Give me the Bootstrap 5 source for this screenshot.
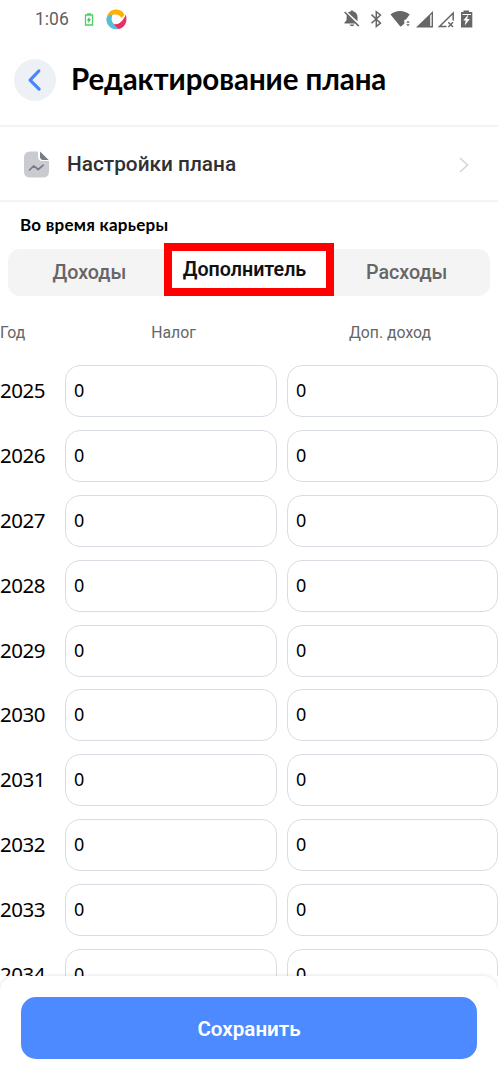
<!DOCTYPE html>
<html lang="ru">
<head>
<meta charset="utf-8">
<meta name="viewport" content="width=device-width, initial-scale=1">
<title>Редактирование плана</title>
<link rel="stylesheet" href="https://cdn.jsdelivr.net/npm/bootstrap@5.3.0/dist/css/bootstrap.min.css">
<style>
body{font-family:Roboto,"Liberation Sans",sans-serif;background:#fff;color:#000;line-height:1}
.screen{height:1080px}
svg{display:block;flex:none}
.statusbar{height:38px;padding:0 25px 0 35px;color:#5f5f5f}
.clock{font-size:17.500px;line-height:38px;width:49px}
.app-mark{margin-left:11.500px}
.titlebar{height:89px;padding:4px 14px 0;border-bottom:2px solid #f3f4f6}
.back{width:42px;height:42px;background:#edf1f5;border:0;padding:0;margin-top:-8px}
.title{font:700 29.5px/40px Lato,"Noto Sans",sans-serif;letter-spacing:-.08px;margin:-9px 0 0 15px}
.settings{height:75px;padding:2px 29px 0 24px;border-bottom:2px solid #f3f4f6;color:#303033}
.settings-name{font-size:20.800px;font-weight:500;margin-left:18px}
.period{font:700 17px/24px Lato,"Noto Sans",sans-serif;letter-spacing:.25px;height:47px;padding:11px 20px 0}
.segments{height:47px;margin:0 8px;background:#f4f4f4;border-radius:12px;font-size:19.700px;font-weight:500;color:#666}
.seg{flex:1 1 0;text-align:center;line-height:47px}
.seg:first-child{padding-left:2px}
.seg:nth-child(3){padding-right:4px}
.seg-active{left:156px;top:-6px;width:170px;height:53px;border:8.5px solid #f00;background:#fff;color:#111;font-weight:600;line-height:37px;padding-right:9px}
.fields{display:grid;grid-template-columns:65px 212px 10px 211px}
.heads{height:69px;color:#666;font-size:15.800px;line-height:20px;padding-top:27px}
.heads :nth-child(2){padding-left:5px}
.heads :nth-child(4){padding-right:5px}
.yearrow{height:64.9px;align-items:start}
.year{font:400 20.5px/51px "Noto Sans",sans-serif;letter-spacing:-.500px}
.field{height:52px;border:1.5px solid #d9dce3;border-radius:15px;padding:0 8px;font:400 18px/49px "Noto Sans",sans-serif;background:#fff}
.list{height:680px;flex:none}
.bottom{height:104px;border-radius:15px 15px 0 0;background:#fff;box-shadow:0 0 4px rgba(0,0,0,.13);padding:21px 21px 0}
.save,.save:hover{height:62px;border:0;border-radius:15px;background:#4d8aff;color:#fff;font-size:20.600px;font-weight:600;padding-top:8px}
</style>
</head>
<body>
<div class="screen d-flex flex-column overflow-hidden">
  <div class="statusbar d-flex align-items-center">
    <span class="clock">1:06</span>
    <svg width="10" height="13" viewBox="0 0 10 13"><path d="M1.5 2h7v10h-7zM3 1h4" fill="none" stroke="#4bcf63" stroke-width="1.3"/><path d="M5.6 3.7 2.8 7.4h1.7l-.4 2.8 2.9-3.9H5.3z" fill="#2ebd48"/></svg>
    <svg class="app-mark" width="21" height="21" viewBox="0 0 21 21"><path d="M.8 8C2 2.700 6.300.3 10.300.4c4.200.1 7 2.300 8.200 5.500l-3.300 3C13.500 5.500 7.500 3.500.8 8z" fill="#ffb000"/><path d="M19.600 5.500c2.200 5.500.1 11.600-4.600 13.700-3.600 1.600-6.400.8-8.200-1.200l-.6-3c5 1.500 11.500-2.500 13.400-9.500z" fill="#e92e65"/><path d="M.4 9c1.200-2 3.400-3.500 6.300-3.700-2.200 4.500-.6 9.600 6.300 14.600C5.500 21.700-.2 16.400.4 9z" fill="#57bfd5"/><circle cx="10.400" cy="10.400" r="4.700" fill="#fff"/></svg>
    <svg class="ms-auto" width="130" height="20" viewBox="343 9 130 20" fill="#666">
      <path d="M350.500 11.500c.3-1.300 2.700-1.300 3 0 2.600.8 4 3 4 5.500v4.200l-9.600-8.600c.8-.6 1.600-.9 2.600-1.100zM346.800 14.200l8.600 9.300h-10.900v-1l2-2.200zM349.700 24.500h4.600c-.3 2.300-4.300 2.300-4.600 0z"/><path d="m344.600 12 14.200 14.100" stroke="#666" stroke-width="1.5"/>
      <path d="m371.500 14.600 9 8.500-4.200 3.300V11.700l4.200 3.300-9 8.300" fill="none" stroke="#666" stroke-width="1.5"/>
      <path d="M390.500 14.500c5-4.800 14-4.800 19.200 0l-3.900 5.200h-1.500v4l-3.800 3.100zM406.200 22.800l1.800-2 1.800 2zM406.200 24.300l1.800 2 1.800-2z"/>
      <path d="M433 11v16.500h-17z"/><path d="M430.200 15.500 431.600 14v12h-1.400z" fill="#fff"/>
      <path d="M453.200 20.500V13L439.500 26.500h7" fill="none" stroke="#666" stroke-width="1.5"/><path d="m448.300 22.300 4.700 4.800m0-4.800-4.700 4.800" stroke="#666" stroke-width="1.4"/>
      <path d="M463.500 10.500h5.500V12h3.300v15.500H461V12h2.500z"/><path d="m468.200 14.500-5 6h2.500l-1 5 5.200-6.500h-2.700z" fill="#fff"/><path d="M462.500 14.500h8.500" stroke="#fff"/>
    </svg>
  </div>
  <header class="titlebar d-flex align-items-center">
    <button class="back rounded-circle d-flex align-items-center justify-content-center" aria-label="Назад"><svg width="42" height="42" viewBox="0 0 42 42"><path d="m24.800 12-8.700 9.100 9 9" fill="none" stroke="#4786ff" stroke-width="3.2" stroke-linecap="round" stroke-linejoin="round"/></svg></button>
    <h1 class="title text-nowrap">Редактирование плана</h1>
  </header>
  <div class="settings d-flex align-items-center">
    <svg width="25" height="27" viewBox="0 0 25 27"><path d="M7 .5h7V5c0 3.600 1.400 5 5 5h6v10c0 4.500-2 6.500-6.500 6.500h-12C2 26.500 0 24.500 0 20V7C0 2.500 2.500.5 7 .5z" fill="#cacbd1"/><path d="M16 .5 24.700 9H20c-3 0-4-1-4-4z" fill="#777b88"/><path d="m5.500 19 4.300-4.200 4.400 3.700 5-4.300" fill="none" stroke="#777b88" stroke-width="1.700" stroke-linecap="round" stroke-linejoin="round"/></svg>
    <span class="settings-name">Настройки плана</span>
    <svg class="ms-auto" width="10" height="16" viewBox="0 0 10 16"><path d="m1 1 7.500 7L1 15" fill="none" stroke="#d5d7da" stroke-width="1.700"/></svg>
  </div>
  <div class="period">Во время карьеры</div>
  <div class="segments position-relative d-flex">
    <span class="seg">Доходы</span>
    <span class="seg"></span>
    <span class="seg">Расходы</span>
    <span class="seg-active position-absolute text-center">Дополнитель</span>
  </div>
  <div class="list overflow-hidden" id="list">
    <div class="fields heads"><span>Год</span><span class="text-center">Налог</span><span></span><span class="text-center">Доп. доход</span></div>
  </div>
  <footer class="bottom position-relative flex-shrink-0"><button class="btn save w-100">Сохранить</button></footer>
</div>
<script>
const list = document.getElementById('list');
for (let year = 2025; year <= 2034; year++) {
  list.insertAdjacentHTML('beforeend', `<div class="fields yearrow"><span class="year">${year}</span><div class="field">0</div><span></span><div class="field">0</div></div>`);
}
</script>
<script src="https://cdn.jsdelivr.net/npm/bootstrap@5.3.0/dist/js/bootstrap.bundle.min.js"></script>
</body>
</html>
